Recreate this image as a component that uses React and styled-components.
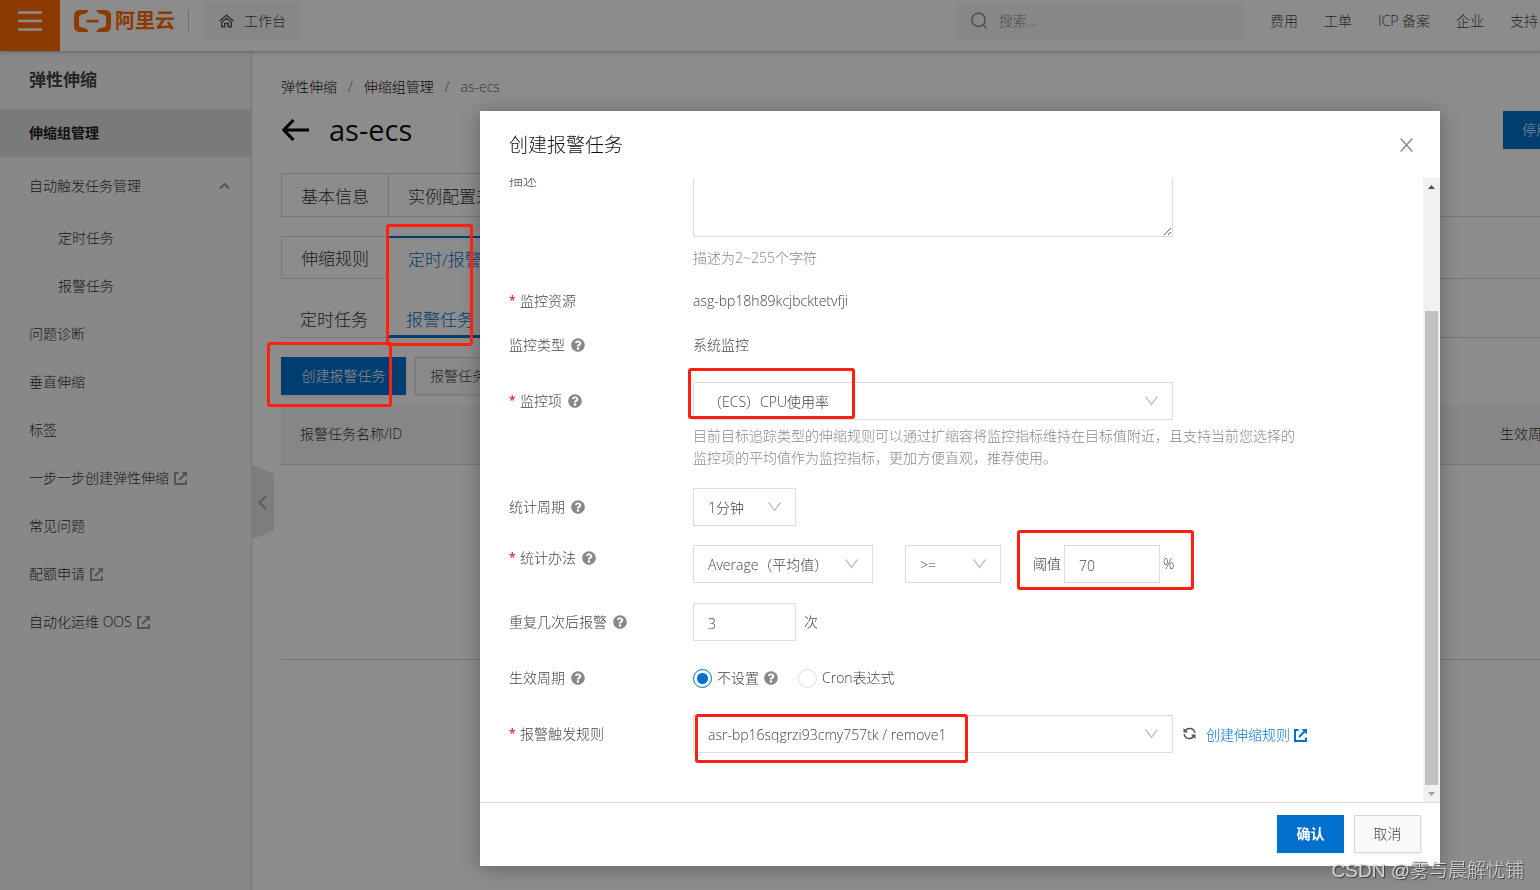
import React from 'react';
import styled, { createGlobalStyle, css } from 'styled-components';
import { FaQuestionCircle } from 'react-icons/fa';

const GlobalStyle = createGlobalStyle`
  *, *::before, *::after { box-sizing: border-box; }
  html, body { margin: 0; overflow: hidden; }
  body, button, input, select, textarea {
    font-family: "Open Sans", "Noto Sans CJK SC", sans-serif;
    font-size: 14px;
    font-weight: 300;
    line-height: 22px;
    color: #444;
  }
  button { cursor: pointer; }
  a { text-decoration: none; color: inherit; }
  ul, ol { list-style: none; margin: 0; padding: 0; }
`;

const Page = styled.div`
  position: relative;
  min-height: 100vh;
  display: flex;
  flex-direction: column;
  overflow: hidden;
  background: #fff;
`;

/* ---------- top bar ---------- */
const TopBar = styled.header`
  position: relative;
  z-index: 1;
  display: flex;
  align-items: center;
  height: 51px;
  background: #fff;
  box-shadow: 0 1px 4px rgba(0, 0, 0, 0.3);
`;
const MenuButton = styled.button`
  flex: none;
  width: 60px;
  height: 51px;
  padding: 0 0 9px;
  border: 0;
  background: #ff6a00;
  display: grid;
  place-items: center;
`;
const TopItems = styled.div`
  flex: 1;
  min-width: 0;
  display: flex;
  align-items: center;
  padding: 0 2px 10px 14px;
`;
const Logo = styled.a`
  display: flex;
  align-items: center;
  gap: 4px;
  color: #ff6a00;
  font-size: 20px;
  font-weight: 700;
`;
const Divider = styled.span`
  width: 1px;
  height: 22px;
  margin: 0 15px 0 13px;
  background: #ccc;
`;
const Workbench = styled.a`
  display: flex;
  align-items: center;
  gap: 10px;
  height: 38px;
  padding: 0 15px;
  border-radius: 2px;
  background: #f5f6f8;
`;
const Search = styled.label`
  display: flex;
  align-items: center;
  gap: 12px;
  width: 288px;
  height: 36px;
  margin-left: auto;
  padding: 0 15px;
  background: #f5f6f8;
  input {
    flex: 1;
    min-width: 0;
    padding: 0;
    border: 0;
    outline: 0;
    background: none;
  }
  input::placeholder { color: #888; }
`;
const TopNav = styled.nav`
  display: flex;
  gap: 26px;
  margin-left: 26px;
  white-space: nowrap;
`;

/* ---------- sidebar ---------- */
const Body = styled.div`
  flex: 1;
  display: flex;
`;
const Sidebar = styled.aside`
  position: relative;
  flex: none;
  width: 252px;
  background: #f7f7f7;
  border-right: 1px solid #d8d8d8;
`;
const SideTitle = styled.h2`
  margin: 0;
  padding-left: 29px;
  font-size: 17px;
  font-weight: 600;
  line-height: 57px;
  color: #444;
`;
const SideLink = styled.a`
  display: flex;
  align-items: center;
  gap: 5px;
  height: 48px;
  padding: 0 21px 0 ${p => (p.$sub ? 58 : 29)}px;
  color: #333;
  ${p => p.$active && css`
    margin-top: 1px;
    background: #dedede;
    color: #222;
    font-weight: 600;
  `}
  ${p => p.$group && css`
    justify-content: space-between;
    margin: 5px 0 4px;
  `}
`;
const CollapseHandle = styled.button`
  position: absolute;
  left: 251px;
  top: 413px;
  width: 23px;
  height: 76px;
  padding: 0;
  border: 0;
  background: #e4e4e4;
  clip-path: polygon(0 0, 100% 13%, 100% 87%, 0 100%);
  display: grid;
  place-items: center;
`;

/* ---------- main ---------- */
const Main = styled.main`
  flex: 1;
  min-width: 0;
  padding: 25px 0 0 29px;
`;
const Content = styled.div`
  width: calc(100% + 29px);
`;
const Crumbs = styled.ol`
  display: flex;
  gap: 11px;
  color: #666;
  a { color: #111; }
`;
const TitleRow = styled.div`
  display: flex;
  align-items: center;
  height: 38px;
  margin-top: 13px;
`;
const BackButton = styled.button`
  display: flex;
  padding: 0;
  margin-right: 19px;
  border: 0;
  background: none;
`;
const Title = styled.h1`
  margin: 0 auto 0 0;
  font-size: 29px;
  font-weight: 400;
  line-height: 38px;
  color: #111;
`;
const Button = styled.button`
  height: 38px;
  padding: 0 ${p => (p.$compact ? 14 : 18)}px;
  border: 1px solid ${p => (p.$primary ? '#0070cc' : '#d8d8d8')};
  background: ${p => (p.$primary ? '#0070cc' : '#fafafa')};
  color: ${p => (p.$primary ? '#fff' : '#444')};
  font-weight: ${p => (p.$strong ? 600 : 'inherit')};
  box-shadow: 0 1px 3px rgba(0, 0, 0, 0.08);
  white-space: nowrap;
`;
const BoxTabs = styled.div`
  display: flex;
  height: ${p => p.$height}px;
  margin-top: ${p => p.$top}px;
  border-bottom: 1px solid #d8d8d8;
`;
const BoxTab = styled.button`
  padding: 3px 19px 0;
  border: 1px solid #d8d8d8;
  border-left-width: ${p => (p.$first ? 1 : 0)}px;
  border-bottom: 0;
  background: #fff;
  font-size: 17px;
  color: #333;
  ${p => p.$active && css`
    margin-bottom: -1px;
    border-top: 2px solid #0070cc;
    color: #0070cc;
  `}
`;
const LineTabs = styled.div`
  display: flex;
  height: 35px;
  margin-top: 24px;
  border-bottom: 1px solid #d8d8d8;
`;
const LineTab = styled.button`
  padding: 0 19px 2px;
  margin-bottom: -1px;
  border: 0;
  background: none;
  font-size: 17px;
  color: #333;
  ${p => p.$active && css`
    padding-top: 1px;
    padding-bottom: 0;
    border-bottom: 3px solid #0070cc;
    color: #0070cc;
  `}
`;
const Actions = styled.div`
  display: flex;
  gap: 9px;
  margin: 19px 0 10px;
  button:first-child { width: 125px; }
`;
const Table = styled.table`
  width: 100%;
  border-collapse: collapse;
  th {
    height: 59px;
    padding: 0 0 0 19px;
    background: #f5f5f5;
    border-bottom: 1px solid #d8d8d8;
    font-weight: inherit;
    color: #333;
    text-align: left;
    white-space: nowrap;
  }
  th:last-child { width: 88px; }
  td { height: 195px; border-bottom: 1px solid #d8d8d8; }
`;

/* ---------- dialog ---------- */
const Overlay = styled.div`
  position: fixed;
  inset: 0;
  z-index: 2;
  display: flex;
  justify-content: flex-end;
  align-items: stretch;
  padding: 111px 100px 24px;
  background: rgba(0, 0, 0, 0.45);
`;
const Dialog = styled.section`
  width: 960px;
  max-width: 100%;
  display: flex;
  flex-direction: column;
  background: #fff;
  box-shadow: 0 2px 20px rgba(0, 0, 0, 0.3);
`;
const DialogHead = styled.header`
  display: flex;
  justify-content: space-between;
  align-items: center;
  height: 67px;
  padding: 0 27px 0 29px;
  h2 {
    margin: 0;
    font-size: 19px;
    font-weight: inherit;
    color: #111;
  }
  button {
    display: flex;
    padding: 0;
    border: 0;
    background: none;
  }
`;
const DialogBody = styled.div`
  flex: 1;
  min-height: 0;
  display: flex;
`;
const Form = styled.form`
  flex: 1;
  min-width: 0;
  display: flex;
  flex-direction: column;
  justify-content: flex-end;
  padding: 0 29px 49px;
  overflow: hidden;
`;
const FormRow = styled.div`
  flex: none;
  display: grid;
  grid-template-columns: 184px 1fr;
  margin-top: ${p => p.$gap}px;
`;
const LabelCell = styled.div`
  display: flex;
  align-items: center;
  gap: 6px;
  height: ${p => p.$height || 38}px;
`;
const Star = styled.span`
  width: 5px;
  color: #e02020;
  font-size: 12px;
  font-weight: 600;
`;
const Control = styled.div`
  display: flex;
  align-items: center;
  gap: ${p => p.$gap || 0}px;
`;
const Hint = styled.p`
  max-width: 612px;
  margin: ${p => p.$gap}px 0 0;
  color: #888;
`;
const boxed = css`
  width: ${p => p.$width}px;
  height: 38px;
  padding: 2px 14px 0;
  border: 1px solid #ddd;
  border-radius: 0;
  outline: 0;
  background: #fff;
  color: #444;
`;
const TextBox = styled.input`${boxed}`;
const TextArea = styled.textarea`
  display: block;
  width: 480px;
  height: 75px;
  padding: 8px 14px;
  border: 1px solid #ddd;
  outline: 0;
  resize: both;
`;
const SelectWrap = styled.span`
  position: relative;
  display: inline-flex;
  svg {
    position: absolute;
    right: 15px;
    top: 14px;
    pointer-events: none;
  }
`;
const SelectBox = styled.select`
  ${boxed}
  appearance: none;
`;
const RadioLabel = styled.label`
  display: flex;
  align-items: center;
  gap: 5px;
`;
const Radio = styled.input.attrs({ type: 'radio' })`
  appearance: none;
  width: 19px;
  height: 19px;
  margin: 0;
  border: 1px solid #ddd;
  border-radius: 50%;
  &:checked {
    border-color: #0070cc;
    background: radial-gradient(circle, #0070cc 5px, #fff 6px);
  }
`;
const RefreshButton = styled.button`
  display: flex;
  margin: 0 10px;
  padding: 0 0 1px;
  border: 0;
  background: none;
`;
const TextLink = styled.a`
  display: flex;
  align-items: center;
  gap: 4px;
  padding-top: 2px;
  color: #0070cc;
`;
const ScrollTrack = styled.div`
  flex: none;
  width: 17px;
  display: flex;
  flex-direction: column;
  align-items: center;
  background: #f1f1f1;
`;
const ScrollArrow = styled.span`
  height: 17px;
  display: grid;
  place-items: center;
`;
const ScrollThumb = styled.span`
  flex: 1;
  width: 13px;
  margin-top: 116px;
  background: #c1c1c1;
`;
const DialogFoot = styled.footer`
  display: flex;
  justify-content: flex-end;
  gap: 10px;
  padding: 12px 19px 13px;
  border-top: 1px solid #ddd;
  button { width: 67px; }
`;

/* ---------- annotations ---------- */
const Mark = styled.div`
  position: absolute;
  z-index: 3;
  left: ${p => p.$x}px;
  top: ${p => p.$y}px;
  width: ${p => p.$w}px;
  height: ${p => p.$h}px;
  border: 3px solid #ff2010;
  border-radius: 3px;
  pointer-events: none;
`;
const Watermark = styled.div`
  position: absolute;
  z-index: 3;
  right: 16px;
  bottom: 6px;
  font-family: "Liberation Sans", "Noto Sans CJK SC", sans-serif;
  font-size: 19px;
  line-height: 26px;
  color: rgba(225, 225, 225, 0.9);
  text-shadow: 1px 1px 1px rgba(50, 50, 50, 0.9);
`;

/* ---------- icons ---------- */
const LogoMark = () => (
  <svg width="37" height="22" viewBox="0 0 37 22" fill="#ff6a00" aria-hidden="true">
    <path d="M15 0H6Q0 0 0 6v10q0 6 6 6h9l-2.500-3.300L7 17.300q-2-.5-2-2.500V7.200q0-2 2-2.500l5.500-1.400z" />
    <path d="M22 0h9q6 0 6 6v10q0 6-6 6h-9l2.500-3.300 5.500-1.400q2-.5 2-2.500V7.200q0-2-2-2.500l-5.500-1.400z" />
    <path d="M12.500 9.700h12v2.800h-12z" />
  </svg>
);
const HomeIcon = () => (
  <svg width="15" height="14" viewBox="0 0 15 14" fill="none" stroke="#555" strokeWidth="1.400" aria-hidden="true">
    <path d="M.5 7.200 7.500 1.200l7 6" />
    <path d="M2.700 8.300v4.500h3V9.500h3.600v3.300h3V8.300L7.500 4.300z" />
  </svg>
);
const SearchIcon = () => (
  <svg width="16" height="17" viewBox="0 0 16 17" fill="none" stroke="#888" strokeWidth="1.300" aria-hidden="true">
    <circle cx="7.500" cy="7.800" r="6.700" />
    <path d="m12 12.500 3.300 3.700" />
  </svg>
);
const ExternalIcon = ({ color = '#999' }) => (
  <svg width="13" height="13" viewBox="0 0 13 13" fill="none" stroke={color} strokeWidth="2" aria-hidden="true">
    <path d="M4.500 1H1v11h11V8.500" />
    <path d="m5 8 5.500-5.500" />
    <path d="M7.500 0H13v5.500z" fill={color} stroke="none" />
  </svg>
);
const Chevron = () => (
  <svg width="13" height="10" viewBox="0 0 13 10" fill="none" stroke="#c0c0c0" strokeWidth="1.300" aria-hidden="true">
    <path d="m.5.5 6 8 6-8" />
  </svg>
);
const RefreshIcon = () => (
  <svg width="13" height="13" viewBox="0 0 13 13" aria-hidden="true">
    <path d="M2 4.300A5.200 5.200 0 0 1 11.800 6M11 8.700A5.200 5.200 0 0 1 1.200 7" fill="none" stroke="#555" strokeWidth="1.500" />
    <path d="M.5 1v4.600h4.600zM12.500 12V7.400H7.900z" fill="#555" />
  </svg>
);
const Help = () => <FaQuestionCircle size={14} color="#888" aria-hidden="true" />;

/* ---------- composed parts ---------- */
function Label({ htmlFor, required, help, height, children }) {
  return (
    <LabelCell $height={height}>
      {required && <Star>*</Star>}
      <label htmlFor={htmlFor}>{children}</label>
      {help && <Help />}
    </LabelCell>
  );
}
function Select({ id, width, label, children }) {
  return (
    <SelectWrap>
      <SelectBox id={id} $width={width} aria-label={label}>
        <option>{children}</option>
      </SelectBox>
      <Chevron />
    </SelectWrap>
  );
}

const sideLinks = [
  ['伸缩组管理', { $active: true }],
  ['自动触发任务管理', { $group: true }],
  ['定时任务', { $sub: true }],
  ['报警任务', { $sub: true }],
  ['问题诊断', {}],
  ['垂直伸缩', {}],
  ['标签', {}],
  ['一步一步创建弹性伸缩', {}, true],
  ['常见问题', {}],
  ['配额申请', {}, true],
  ['自动化运维 OOS', {}, true],
];

export default function App() {
  return (
    <Page>
      <GlobalStyle />
      <TopBar>
        <MenuButton aria-label="菜单">
          <svg width="24" height="20" viewBox="0 0 24 20" stroke="#fff" strokeWidth="2.500" aria-hidden="true">
            <path d="M0 1.500h24M0 10h24M0 18.500h24" />
          </svg>
        </MenuButton>
        <TopItems>
          <Logo href="#"><LogoMark />阿里云</Logo>
          <Divider />
          <Workbench href="#"><HomeIcon />工作台</Workbench>
          <Search>
            <SearchIcon />
            <input type="text" placeholder="搜索..." aria-label="搜索" />
          </Search>
          <TopNav>
            {['费用', '工单', 'ICP 备案', '企业', '支持'].map(t => <a key={t} href="#">{t}</a>)}
          </TopNav>
        </TopItems>
      </TopBar>

      <Body>
        <Sidebar>
          <SideTitle>弹性伸缩</SideTitle>
          <nav>
            {sideLinks.map(([text, props, external]) => (
              <SideLink key={text} href="#" {...props}>
                {text}
                {external && <ExternalIcon />}
                {props.$group && (
                  <svg width="11" height="8" viewBox="0 0 11 8" fill="none" stroke="#999" strokeWidth="2" aria-hidden="true">
                    <path d="m1 6.500 4.500-4.500L10 6.500" />
                  </svg>
                )}
              </SideLink>
            ))}
          </nav>
          <CollapseHandle aria-label="收起">
            <svg width="9" height="15" viewBox="0 0 9 15" fill="none" stroke="#aaa" strokeWidth="2" aria-hidden="true">
              <path d="M8 1 1.500 7.500 8 14" />
            </svg>
          </CollapseHandle>
        </Sidebar>

        <Main>
          <Content>
            <Crumbs>
              <li><a href="#">弹性伸缩</a></li>
              <li>/</li>
              <li><a href="#">伸缩组管理</a></li>
              <li>/</li>
              <li>as-ecs</li>
            </Crumbs>
            <TitleRow>
              <BackButton aria-label="返回">
                <svg width="29" height="22" viewBox="0 0 29 22" fill="none" stroke="#000" strokeWidth="3.200" strokeLinejoin="round" aria-hidden="true">
                  <path d="M12.500 1 2.800 11l9.700 10M3 11h25" />
                </svg>
              </BackButton>
              <Title>as-ecs</Title>
              <Button $primary>停用</Button>
            </TitleRow>
            <BoxTabs $height={44} $top={24}>
              <BoxTab $first>基本信息</BoxTab>
              <BoxTab>实例配置来源</BoxTab>
            </BoxTabs>
            <BoxTabs $height={43} $top={19}>
              <BoxTab $first>伸缩规则</BoxTab>
              <BoxTab $active>定时/报警任务</BoxTab>
            </BoxTabs>
            <LineTabs>
              <LineTab>定时任务</LineTab>
              <LineTab $active>报警任务</LineTab>
            </LineTabs>
            <Actions>
              <Button $primary>创建报警任务</Button>
              <Button $compact>报警任务历史</Button>
            </Actions>
            <Table>
              <thead>
                <tr><th>报警任务名称/ID</th><th>生效周期</th></tr>
              </thead>
              <tbody>
                <tr><td colSpan={2} /></tr>
              </tbody>
            </Table>
          </Content>
        </Main>
      </Body>

      <Overlay>
        <Dialog role="dialog" aria-labelledby="dialog-title">
          <DialogHead>
            <h2 id="dialog-title">创建报警任务</h2>
            <button aria-label="关闭">
              <svg width="13" height="14" viewBox="0 0 13 14" fill="none" stroke="#888" strokeWidth="1.400" aria-hidden="true">
                <path d="m.7.500 11.600 13M12.300.5.700 13.500" />
              </svg>
            </button>
          </DialogHead>
          <DialogBody>
            <Form>
              <FormRow $gap={0}>
                <Label htmlFor="desc" height={36}>描述</Label>
                <div>
                  <TextArea id="desc" />
                  <Hint $gap={10}>描述为2~255个字符</Hint>
                </div>
              </FormRow>
              <FormRow $gap={21}>
                <Label required height={22}>监控资源</Label>
                <Control>asg-bp18h89kcjbcktetvfji</Control>
              </FormRow>
              <FormRow $gap={22}>
                <Label help height={22}>监控类型</Label>
                <Control>系统监控</Control>
              </FormRow>
              <FormRow $gap={26}>
                <Label htmlFor="metric" required help>监控项</Label>
                <div>
                  <Control><Select id="metric" width={480}>（ECS）CPU使用率</Select></Control>
                  <Hint $gap={5}>目前目标追踪类型的伸缩规则可以通过扩缩容将监控指标维持在目标值附近，且支持当前您选择的监控项的平均值作为监控指标，更加方便直观，推荐使用。</Hint>
                </div>
              </FormRow>
              <FormRow $gap={19}>
                <Label htmlFor="period" help>统计周期</Label>
                <Control><Select id="period" width={103}>1分钟</Select></Control>
              </FormRow>
              <FormRow $gap={19}>
                <Label htmlFor="method" required help height={26}>统计办法</Label>
                <Control $gap={32}>
                  <Select id="method" width={180}>Average（平均值）</Select>
                  <Select width={96} label="比较">&gt;=</Select>
                  <Control $gap={3}>
                    <label htmlFor="threshold">阈值</label>
                    <TextBox id="threshold" $width={96} defaultValue="70" />
                    <span>%</span>
                  </Control>
                </Control>
              </FormRow>
              <FormRow $gap={20}>
                <Label htmlFor="repeat" help>重复几次后报警</Label>
                <Control $gap={8}>
                  <TextBox id="repeat" $width={103} defaultValue="3" />
                  <span>次</span>
                </Control>
              </FormRow>
              <FormRow $gap={26}>
                <Label help height={22}>生效周期</Label>
                <Control $gap={20}>
                  <RadioLabel><Radio name="effective" defaultChecked />不设置<Help /></RadioLabel>
                  <RadioLabel><Radio name="effective" />Cron表达式</RadioLabel>
                </Control>
              </FormRow>
              <FormRow $gap={26}>
                <Label htmlFor="rule" required>报警触发规则</Label>
                <Control>
                  <Select id="rule" width={480}>asr-bp16sqgrzi93cmy757tk / remove1</Select>
                  <RefreshButton type="button" aria-label="刷新"><RefreshIcon /></RefreshButton>
                  <TextLink href="#">创建伸缩规则<ExternalIcon color="#0070cc" /></TextLink>
                </Control>
              </FormRow>
            </Form>
            <ScrollTrack aria-hidden="true">
              <ScrollArrow><svg width="7" height="4"><path d="M0 4h7L3.500 0z" fill="#505050" /></svg></ScrollArrow>
              <ScrollThumb />
              <ScrollArrow><svg width="7" height="4"><path d="M0 0h7L3.500 4z" fill="#a0a0a0" /></svg></ScrollArrow>
            </ScrollTrack>
          </DialogBody>
          <DialogFoot>
            <Button $primary $strong>确认</Button>
            <Button>取消</Button>
          </DialogFoot>
        </Dialog>
      </Overlay>

      <Mark $x={386} $y={224} $w={87} $h={122} />
      <Mark $x={267} $y={342} $w={125} $h={65} />
      <Mark $x={688} $y={368} $w={167} $h={51} />
      <Mark $x={1017} $y={530} $w={177} $h={60} />
      <Mark $x={695} $y={714} $w={273} $h={49} />
      <Watermark>CSDN @雾与晨解忧铺</Watermark>
    </Page>
  );
}
